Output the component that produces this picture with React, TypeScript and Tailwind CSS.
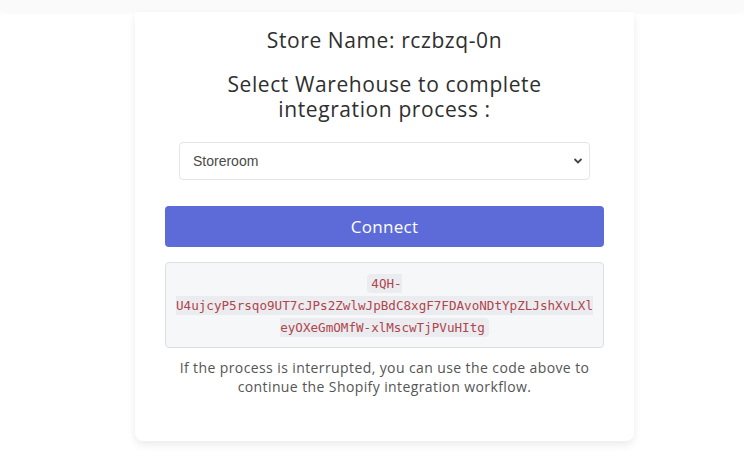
const code =
  '4QH-U4ujcyP5rsqo9UT7cJPs2ZwlwJpBdC8xgF7FDAvoNDtYpZLJshXvLXleyOXeGmOMfW-xlMscwTjPVuHItg';

export default function App() {
  return (
    <div className="h-[464px] w-[744px] overflow-hidden bg-white font-['Open_Sans',sans-serif]">
      <div className="h-[12px] w-full bg-[#fafafb] shadow-[0_1px_3px_rgba(0,0,0,0.03)]" />
      <div className="ml-[135px] w-[499px] rounded-b-lg bg-white pt-[15px] pb-[45px] shadow-[0_4px_8px_rgba(0,0,0,0.08)]">
        <h2 className="text-center text-[21px] font-medium leading-[26px] tracking-[0.6px] text-[#2f2f2f]">
          Store Name: rczbzq-0n
        </h2>
        <h3 className="mt-[19px] text-center text-[21px] font-medium leading-[25px] tracking-[0.6px] text-[#2f2f2f]">
          Select Warehouse to complete
          <br />
          integration process :
        </h3>
        <div className="mt-[20px] flex justify-center">
          <div className="relative w-[411px]">
            <select
              defaultValue="Storeroom"
              className="h-[38px] w-full appearance-none rounded border border-[#e3e5e8] bg-white pl-[13px] font-['Liberation_Sans',sans-serif] text-[14px] text-[#4a4a4a] outline-none"
            >
              <option>Storeroom</option>
            </select>
            <svg
              className="pointer-events-none absolute top-[15px] right-[7px]"
              width="10"
              height="8"
              viewBox="0 0 10 8"
            >
              <path d="M1.5 2 L5 5.5 L8.5 2" fill="none" stroke="#444" strokeWidth="1.8" />
            </svg>
          </div>
        </div>
        <div className="mx-[30px] mt-[26px] flex flex-col gap-[15px]">
          <button className="h-[41px] w-full rounded bg-[#5c6bd8] text-[17px] tracking-[0.3px] text-white">
            Connect
          </button>
          <div className="rounded border border-[#dcdfe4] bg-[#f6f7f9] px-[10px] py-[9px] text-center leading-[21px]">
            <code className="rounded bg-[#ebecf0] px-[4px] py-[2px] font-['DejaVu_Sans_Mono',monospace] text-[12.6px] break-words text-[#b0454c]">
              {code}
            </code>
          </div>
          <p className="-mt-[5px] text-center text-[14px] leading-[19px] tracking-[0.4px] text-[#555]">
            If the process is interrupted, you can use the code above to continue the Shopify
            integration workflow.
          </p>
        </div>
      </div>
    </div>
  );
}
